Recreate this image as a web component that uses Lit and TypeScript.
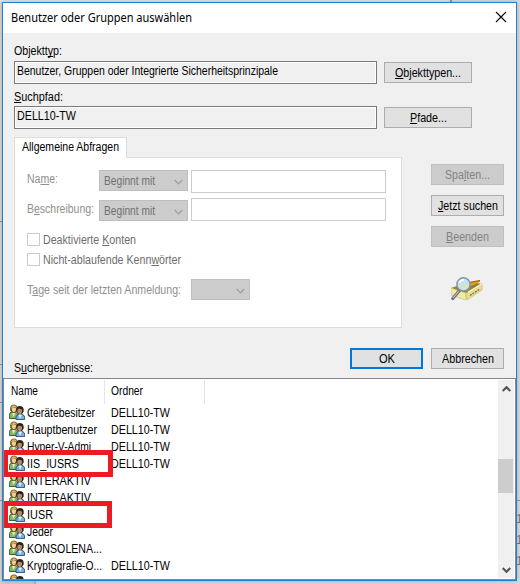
import { LitElement, html, css, nothing } from "lit";
import { customElement, property } from "lit/decorators.js";

// Text condensed or widened horizontally to a given width, like the dialog's narrow UI font.
@customElement("fit-text")
class FitText extends LitElement {
  @property({ type: Number }) w = 0;
  static styles = css`
    :host { display: inline-block; white-space: nowrap; line-height: 16px; height: 16px; text-align: left; }
    span { display: inline-block; transform-origin: 0 0; }
    ::slotted(u) { text-decoration: underline 1px; text-underline-offset: 1px; text-decoration-skip-ink: none; }
  `;
  firstUpdated() {
    const s = this.renderRoot.querySelector("span") as HTMLElement;
    const natural = s.getBoundingClientRect().width;
    this.style.width = `${this.w}px`;
    s.style.transform = `scaleX(${this.w / natural})`;
  }
  render() { return html`<span><slot></slot></span>`; }
}

@customElement("people-icon")
class PeopleIcon extends LitElement {
  static styles = css`:host, svg { display: block; width: 16px; height: 16px; }`;
  render() {
    return html`<svg viewBox="0 0 16 16">
      <path d="M.4 14.5V10.5Q.8 8 4 7.6Q7.5 7.8 8.6 10V14.5Z" fill="#86b866" stroke="#2f4f28" stroke-width=".9"/>
      <path d="M2.8 8.2L4.6 13L6.6 8.2Z" fill="#d8edc8"/>
      <path d="M1.2 6.8Q.2 .6 5 .4Q9.6 .6 8.8 7L6.5 9H3Z" fill="#7a5c24"/>
      <path d="M2.2 4.5Q2.4 1.3 5.2 1.3Q7.6 1.6 7.8 4L5 3Z" fill="#d6b45c"/>
      <path d="M2.8 4.5L4.5 3.2L7 4.3Q7 8 4.9 8.2Q2.8 7.8 2.8 4.5Z" fill="#ecd0a0"/>
      <path d="M7 15.6V12.8Q8 10.2 11.2 10Q15 10.2 15.6 12.8V15.6Z" fill="#78aee0" stroke="#26486e" stroke-width=".9"/>
      <path d="M9.4 10.4L11 15L13 10.4Z" fill="#e2f1fb"/>
      <path d="M7.3 7Q6.8 2 11 1.9Q15.4 2 14.6 7.5L13 10H9Z" fill="#2b211d"/>
      <path d="M8.3 6L9.8 4.5L13 5.5Q13.4 9.8 10.8 10.3Q8.3 9.8 8.3 6Z" fill="#b98a68"/>
    </svg>`;
  }
}

interface Row { name: string; w: number; folder: boolean; }
const rows: Row[] = [
  { name: "Gerätebesitzer", w: 68, folder: true },
  { name: "Hauptbenutzer", w: 70, folder: true },
  { name: "Hyper-V-Admi", w: 64, folder: true },
  { name: "IIS_IUSRS", w: 52, folder: true },
  { name: "INTERAKTIV", w: 64, folder: false },
  { name: "INTERAKTIV", w: 64, folder: false },
  { name: "IUSR", w: 26, folder: false },
  { name: "Jeder", w: 26, folder: false },
  { name: "KONSOLENA...", w: 75, folder: false },
  { name: "Kryptografie-O...", w: 75, folder: true },
  { name: "", w: 0, folder: false },
];

@customElement("app-root")
class AppRoot extends LitElement {
  static styles = css`
    :host { display: block; position: relative; width: 520px; height: 584px; overflow: hidden; box-sizing: border-box;
      padding: 2px; background: #dcdcdc; font: 12.5px/16px "Liberation Sans", Arial, sans-serif; color: #000; }
    * { box-sizing: border-box; }
    .behind { position: absolute; inset: 0; }
    .dialog { position: relative; width: 515px; height: 579px; border: 1px solid #1883d7; background: #f0f0f0;
      display: flex; flex-direction: column; box-shadow: 0 0 5px rgba(0,0,0,.25); }
    .title { height: 30px; flex: none; background: #fff; display: flex; justify-content: space-between; padding: 7px 9px 0 8px;
      font-family: "Noto Sans", "Open Sans", sans-serif; font-size: 12px; }
    .close { width: 12px; height: 12px; margin-top: 1px; }
    .types { display: grid; grid-template-columns: 363px 88px; column-gap: 7px; padding: 10px 0 0 11px; height: 100px; flex: none; grid-template-rows: 45px 45px; }
    .field { display: flex; flex-direction: column; }
    .box { height: 23px; margin-top: 2px; border: 1px solid #7a7a7a; box-shadow: inset 0 0 0 1px #fff; padding: 1px 2px; }
    .field.second { padding-top: 1px; }
    .field.second .box { margin-top: 1px; }
    .btn { display: flex; align-items: center; justify-content: center; border: 1px solid #adadad; background: #e1e1e1; height: 21px; padding-top: 1px; }
    .types .btn { margin-top: 19px; }
    .btn.off { border-color: #bfbfbf; background: #ccc; color: #838383; }
    .btn.ok { border: 2px solid #0078d7; padding: 0; }
    .middle { display: flex; height: 215px; padding-left: 11px; flex: none; }
    .query { width: 388px; flex: none; height: 191px; margin-top: 4px; display: flex; flex-direction: column; }
    .tab { width: 113px; height: 21px; flex: none; border: 1px solid #dcdcdc; border-bottom: 0; background: #fff; padding: 1px 0 0 7px; margin-bottom: -1px; position: relative; }
    .panel { height: 171px; flex: none; border: 1px solid #dcdcdc; background: #fff; padding: 12px 0 0 12px; color: #8f8f8f; }
    .cond { display: grid; grid-template-columns: 72px 89px 198px; height: 30px; align-items: start; }
    .cond > fit-text { margin-top: 1px; }
    .combo { width: 89px; height: 21px; border: 1px solid #bfbfbf; background: #ccc; color: #707070; display: flex; justify-content: space-between; padding: 2px 4px 0 4px; }
    .combo svg { width: 9px; height: 6px; margin-top: 6px; }
    .combo.small { width: 59px; justify-content: flex-end; }
    .input { height: 23px; width: 195px; margin-left: 3px; border: 1px solid #ccc; background: #fff; }
    .cond.second .input { margin-top: -2px; }
    .checks { padding-top: 3px; }
    .check { display: flex; gap: 3px; height: 20px; color: #6d6d6d; }
    .check i { width: 13px; height: 13px; border: 1px solid #ccc; background: #fff; }
    .check fit-text { margin-top: -1px; }
    .days { display: flex; justify-content: space-between; width: 223px; padding-top: 6px; }
    .days fit-text { margin-top: 3px; }
    .side { width: 73px; margin-left: 29px; margin-top: 31px; display: flex; flex-direction: column; gap: 10px; }
    .lens { width: 32px; height: 24px; margin: 20px 0 0 20px; }
    .actions { display: flex; height: 30px; padding-left: 11px; flex: none; }
    .actions .results { width: 336px; padding-top: 12px; }
    .actions .btn { width: 73px; margin-right: 8px; }
    .list { display: flex; justify-content: space-between; border: 1px solid #828790; background: #fff; flex: 1; min-height: 0; overflow: hidden; }
    .table { width: 300px; overflow: hidden; }
    .head { display: grid; grid-template-columns: 101px 100px; height: 25px; padding-top: 1px; }
    .head div { border-right: 1px solid #e5e5e5; padding: 3px 0 0 7px; height: 24px; }
    .head div + div { padding-left: 6px; }
    .row { display: grid; grid-template-columns: 18px 84px auto; height: 17px; padding-left: 5px; }
    .row fit-text { margin-top: 1px; }
    .bar { width: 16px; background: #f0f0f0; margin: 1px 1px 1px 0; display: flex; flex-direction: column; align-items: center; padding: 6px 0 5px; }
    .thumb { width: 15px; height: 34px; flex: none; background: #cdcdcd; margin: 67px 1px auto 0; }
    .bar svg { width: 9px; height: 6px; flex: none; }
    .mark { position: absolute; border: 5px solid #ed1c24; border-left-width: 4px; left: 4px; height: 27px; }
    .m1 { top: 450px; width: 109px; }
    .m2 { top: 501px; width: 108px; }
  `;
  chevron(c: string, w = 1.3, up = false) {
    return html`<svg viewBox="0 0 9 6"><path d=${up ? "M.7 5L4.5 1.2L8.3 5" : "M.7 1L4.5 4.8L8.3 1"} fill="none" stroke=${c} stroke-width=${w}/></svg>`;
  }
  render() {
    return html`
      <svg class="behind" viewBox="0 0 520 584">
        <path d="M0 0H450V2H0Z" fill="#e6e6e6"/><path d="M450 0H452V2H450Z" fill="#999"/>
        <path d="M0 221.5H2M0 364.5H2M0 402.5H2M0 500.5H2M516 500.5H520" stroke="#999"/>
        <path d="M0 581H35V584H0Z" fill="#cfcfcf"/><path d="M35 581V584" stroke="#999"/>
        <g font-size="12" fill="#86707c"><text x="516" y="523">1</text><text x="516" y="544">1</text><text x="516" y="565">1</text></g>
      </svg>
      <div class="dialog">
        <div class="title"><fit-text w="181">Benutzer oder Gruppen auswählen</fit-text>
          <svg class="close" viewBox="0 0 12 12"><path d="M1 1L11 11M11 1L1 11" stroke="#000" stroke-width="1.1"/></svg></div>
        <div class="types">
          <div class="field"><fit-text w="48">Objektt<u>y</u>p:</fit-text><div class="box"><fit-text w="261">Benutzer, Gruppen oder Integrierte Sicherheitsprinzipale</fit-text></div></div>
          <div class="btn"><fit-text w="66"><u>O</u>bjekttypen...</fit-text></div>
          <div class="field second"><fit-text w="49"><u>S</u>uchpfad:</fit-text><div class="box"><fit-text w="59">DELL10-TW</fit-text></div></div>
          <div class="btn"><fit-text w="37"><u>P</u>fade...</fit-text></div>
        </div>
        <div class="middle">
          <div class="query">
            <div class="tab"><fit-text w="97">Allgemeine Abfragen</fit-text></div>
            <div class="panel">
              <div class="cond"><fit-text w="31">Na<u>m</u>e:</fit-text><div class="combo"><fit-text w="51">Beginnt mit</fit-text>${this.chevron("#a0a0a0")}</div><div class="input"></div></div>
              <div class="cond second"><fit-text w="67">B<u>e</u>schreibung:</fit-text><div class="combo"><fit-text w="51">Beginnt mit</fit-text>${this.chevron("#a0a0a0")}</div><div class="input"></div></div>
              <div class="checks">
                <div class="check"><i></i><fit-text w="93">Deaktivierte <u>K</u>onten</fit-text></div>
                <div class="check"><i></i><fit-text w="138">Nicht-ablaufende Kenn<u>w</u>örter</fit-text></div>
              </div>
              <div class="days"><fit-text w="154">T<u>a</u>ge seit der letzten Anmeldung:</fit-text><div class="combo small">${this.chevron("#a0a0a0")}</div></div>
            </div>
          </div>
          <div class="side">
            <div class="btn off"><fit-text w="45">Spa<u>l</u>ten...</fit-text></div>
            <div class="btn"><fit-text w="60"><u>J</u>etzt suchen</fit-text></div>
            <div class="btn off"><fit-text w="43"><u>B</u>eenden</fit-text></div>
            <svg class="lens" viewBox="0 0 32 24">
              <path d="M0 11L6 9L20 5L31 7L15 17Z" fill="#8f8138"/>
              <path d="M18 5L29 3L29 5L20 9Z" fill="#e0a020"/><path d="M19 5.5L29 3.5" stroke="#7a5410" stroke-width=".8"/>
              <path d="M0 11L15 16V23L7 20.5L0 18Z" fill="#f1ebaa" stroke="#c3b768" stroke-width=".6"/>
              <path d="M15 16L31 6.5V13L16 23Z" fill="#e6dd92" stroke="#c3b768" stroke-width=".6"/>
              <path d="M17 15.2L31 6.8" stroke="#faf6cc" stroke-width="1.2"/>
              <path d="M19 18.5L29 12" stroke="#77754e" stroke-width="1.3" stroke-dasharray="2 1"/>
              <path d="M8.5 13.5L1.8 21.5" stroke="#6f6f7e" stroke-width="3.2" stroke-linecap="round"/><path d="M8 14L2 21" stroke="#c8c8d6" stroke-width="1.1"/>
              <circle cx="12.5" cy="7.4" r="6.6" fill="#c4e2f6" stroke="#8195a8" stroke-width="1.4"/>
              <path d="M7.2 9L17.5 6.5L18 9.5L14 13L9 12Z" fill="#dfe6b4" opacity=".8"/><path d="M8 6Q9.5 3 13 2.8" fill="none" stroke="#fff" stroke-width="1.6"/>
            </svg>
          </div>
        </div>
        <div class="actions"><div class="results"><fit-text w="79">S<u>u</u>chergebnisse:</fit-text></div>
          <div class="btn ok"><fit-text w="16">OK</fit-text></div><div class="btn"><fit-text w="52">Abbrechen</fit-text></div></div>
        <div class="list">
          <div class="table">
            <div class="head"><div><fit-text w="27">Name</fit-text></div><div><fit-text w="32">Ordner</fit-text></div></div>
            ${rows.map(r => html`<div class="row"><people-icon></people-icon><div>${r.name ? html`<fit-text w=${r.w}>${r.name}</fit-text>` : nothing}</div>${r.folder ? html`<fit-text w="59">DELL10-TW</fit-text>` : nothing}</div>`)}
          </div>
          <div class="bar">${this.chevron("#555", 2.2, true)}<div class="thumb"></div>${this.chevron("#555", 2.2)}</div>
        </div>
      </div>
      <div class="mark m1"></div><div class="mark m2"></div>`;
  }
}
